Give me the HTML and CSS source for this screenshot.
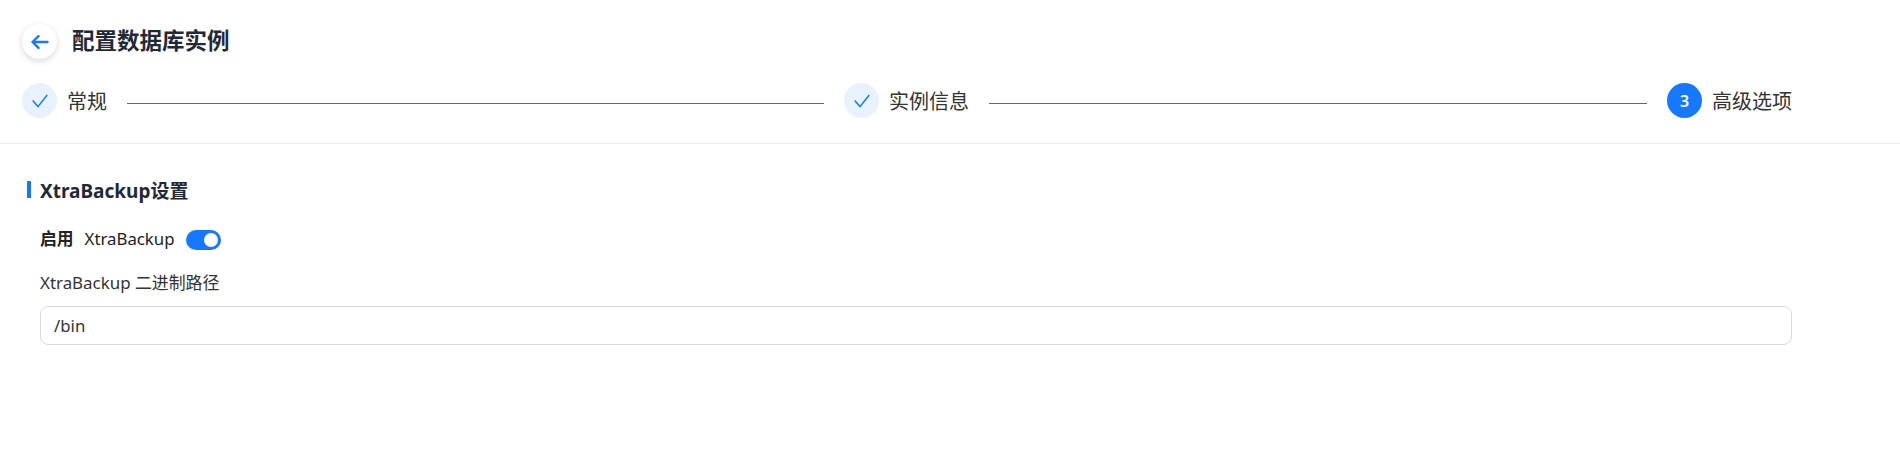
FILE: index.html
```html
<!DOCTYPE html>
<html lang="zh-CN">
<head>
<meta charset="utf-8">
<title>配置数据库实例</title>
<link rel="stylesheet" href="styles.css">
</head>
<body>
<header class="head">
  <div class="title-row">
    <button class="back" aria-label="返回">
      <svg width="18" height="14" viewBox="0 0 18 14" fill="none" stroke="#1677ff" stroke-width="2.4" stroke-linecap="round" stroke-linejoin="round"><path d="M1.5 7h15M7.5 1.2 1.5 7l6 5.8"/></svg>
    </button>
    <h1 class="title">配置数据库实例</h1>
  </div>
  <div class="steps">
    <div class="step first">
      <span class="dot done"><svg width="16" height="14" viewBox="0 0 16 14" fill="none" stroke="#1677ff" stroke-width="1.5"><path d="M.7 6.5 6 12.6 15.2 1"/></svg></span>
      <span class="label">常规</span>
      <span class="line"></span>
    </div>
    <div class="step">
      <span class="dot done"><svg width="16" height="14" viewBox="0 0 16 14" fill="none" stroke="#1677ff" stroke-width="1.5"><path d="M.7 6.5 6 12.6 15.2 1"/></svg></span>
      <span class="label">实例信息</span>
      <span class="line"></span>
    </div>
    <div class="step last">
      <span class="dot active">3</span>
      <span class="label">高级选项</span>
    </div>
  </div>
</header>
<main class="content">
  <h2 class="section">XtraBackup设置</h2>
  <div class="form">
    <div class="switch-row">
      <span class="switch-label"><b>启用</b>XtraBackup</span>
      <span class="switch"><span class="knob"></span></span>
    </div>
    <label class="field-label" for="bin">XtraBackup 二进制路径</label>
    <input class="input" id="bin" type="text" value="/bin">
  </div>
</main>
</body>
</html>
```
FILE: styles.css
```css
* { box-sizing: border-box; }
html, body { margin: 0; padding: 0; background: #fff; }
body {
  font-family: "Noto Sans", "Noto Sans CJK SC", sans-serif;
  color: #1f2937;
  height: 450px;
  overflow: hidden;
}
.head {
  height: 144px;
  padding: 24px 108px 0 22px;
  border-bottom: 1px solid #ebedf0;
}
.title-row {
  display: flex;
  align-items: center;
  gap: 15px;
  height: 35px;
}
.back {
  width: 35px;
  height: 35px;
  padding: 0;
  border: 0;
  border-radius: 50%;
  background: #fff;
  box-shadow: 0 2px 6px rgba(0, 0, 0, 0.16);
  display: flex;
  align-items: center;
  justify-content: center;
}
.title {
  margin: -2px 0 0;
  font-size: 22.5px;
  line-height: 30px;
  font-weight: 700;
  color: #1f2937;
}
.steps {
  display: flex;
  margin-top: 24px;
}
.step {
  flex: 1;
  display: flex;
  align-items: center;
  height: 35px;
}
.step.first { flex: 0 0 822px; }
.step.last { flex: 0 0 125px; }
.dot {
  flex: none;
  width: 35px;
  height: 35px;
  border-radius: 50%;
  display: flex;
  align-items: center;
  justify-content: center;
}
.dot.done { background: #e8f2ff; }
.dot.active {
  background: #1677ff;
  color: #fff;
  font-size: 16px;
  font-weight: 600;
}
.label {
  flex: none;
  margin-left: 10px;
  margin-top: 2px;
  font-size: 20px;
  line-height: 28px;
  color: #333;
}
.line {
  flex: 1;
  height: 1px;
  margin: 5px 20px 0;
  background: #2a73c0;
}
.content { padding: 37px 108px 0 27px; }
.section {
  margin: 0;
  padding-left: 9px;
  border-left: 4px solid #1677ff;
  height: 17px;
  display: flex;
  align-items: center;
  font-size: 19px;
  font-weight: 700;
  color: #1f2937;
}
.form {
  margin-left: 13px;
  padding-top: 32px;
}
.switch-row {
  display: flex;
  align-items: center;
  gap: 11px;
  height: 20px;
}
.switch-label {
  font-size: 16.8px;
  line-height: 20px;
  margin-top: -2px;
  color: #222;
}
.switch-label b { margin-right: 11px; font-weight: 700; }
.switch {
  width: 35px;
  height: 20px;
  padding: 3px;
  border-radius: 10px;
  background: #1677ff;
  display: flex;
  justify-content: flex-end;
}
.knob {
  width: 14px;
  height: 14px;
  border-radius: 50%;
  background: #fff;
}
.field-label {
  display: block;
  margin-top: 22px;
  font-size: 16.9px;
  line-height: 22px;
  color: #333;
}
.input {
  display: block;
  width: 100%;
  height: 39px;
  margin-top: 12px;
  padding: 0 13px;
  border: 1px solid #d9d9d9;
  border-radius: 8px;
  font: inherit;
  font-size: 16.8px;
  color: #333;
  outline: none;
}
```
